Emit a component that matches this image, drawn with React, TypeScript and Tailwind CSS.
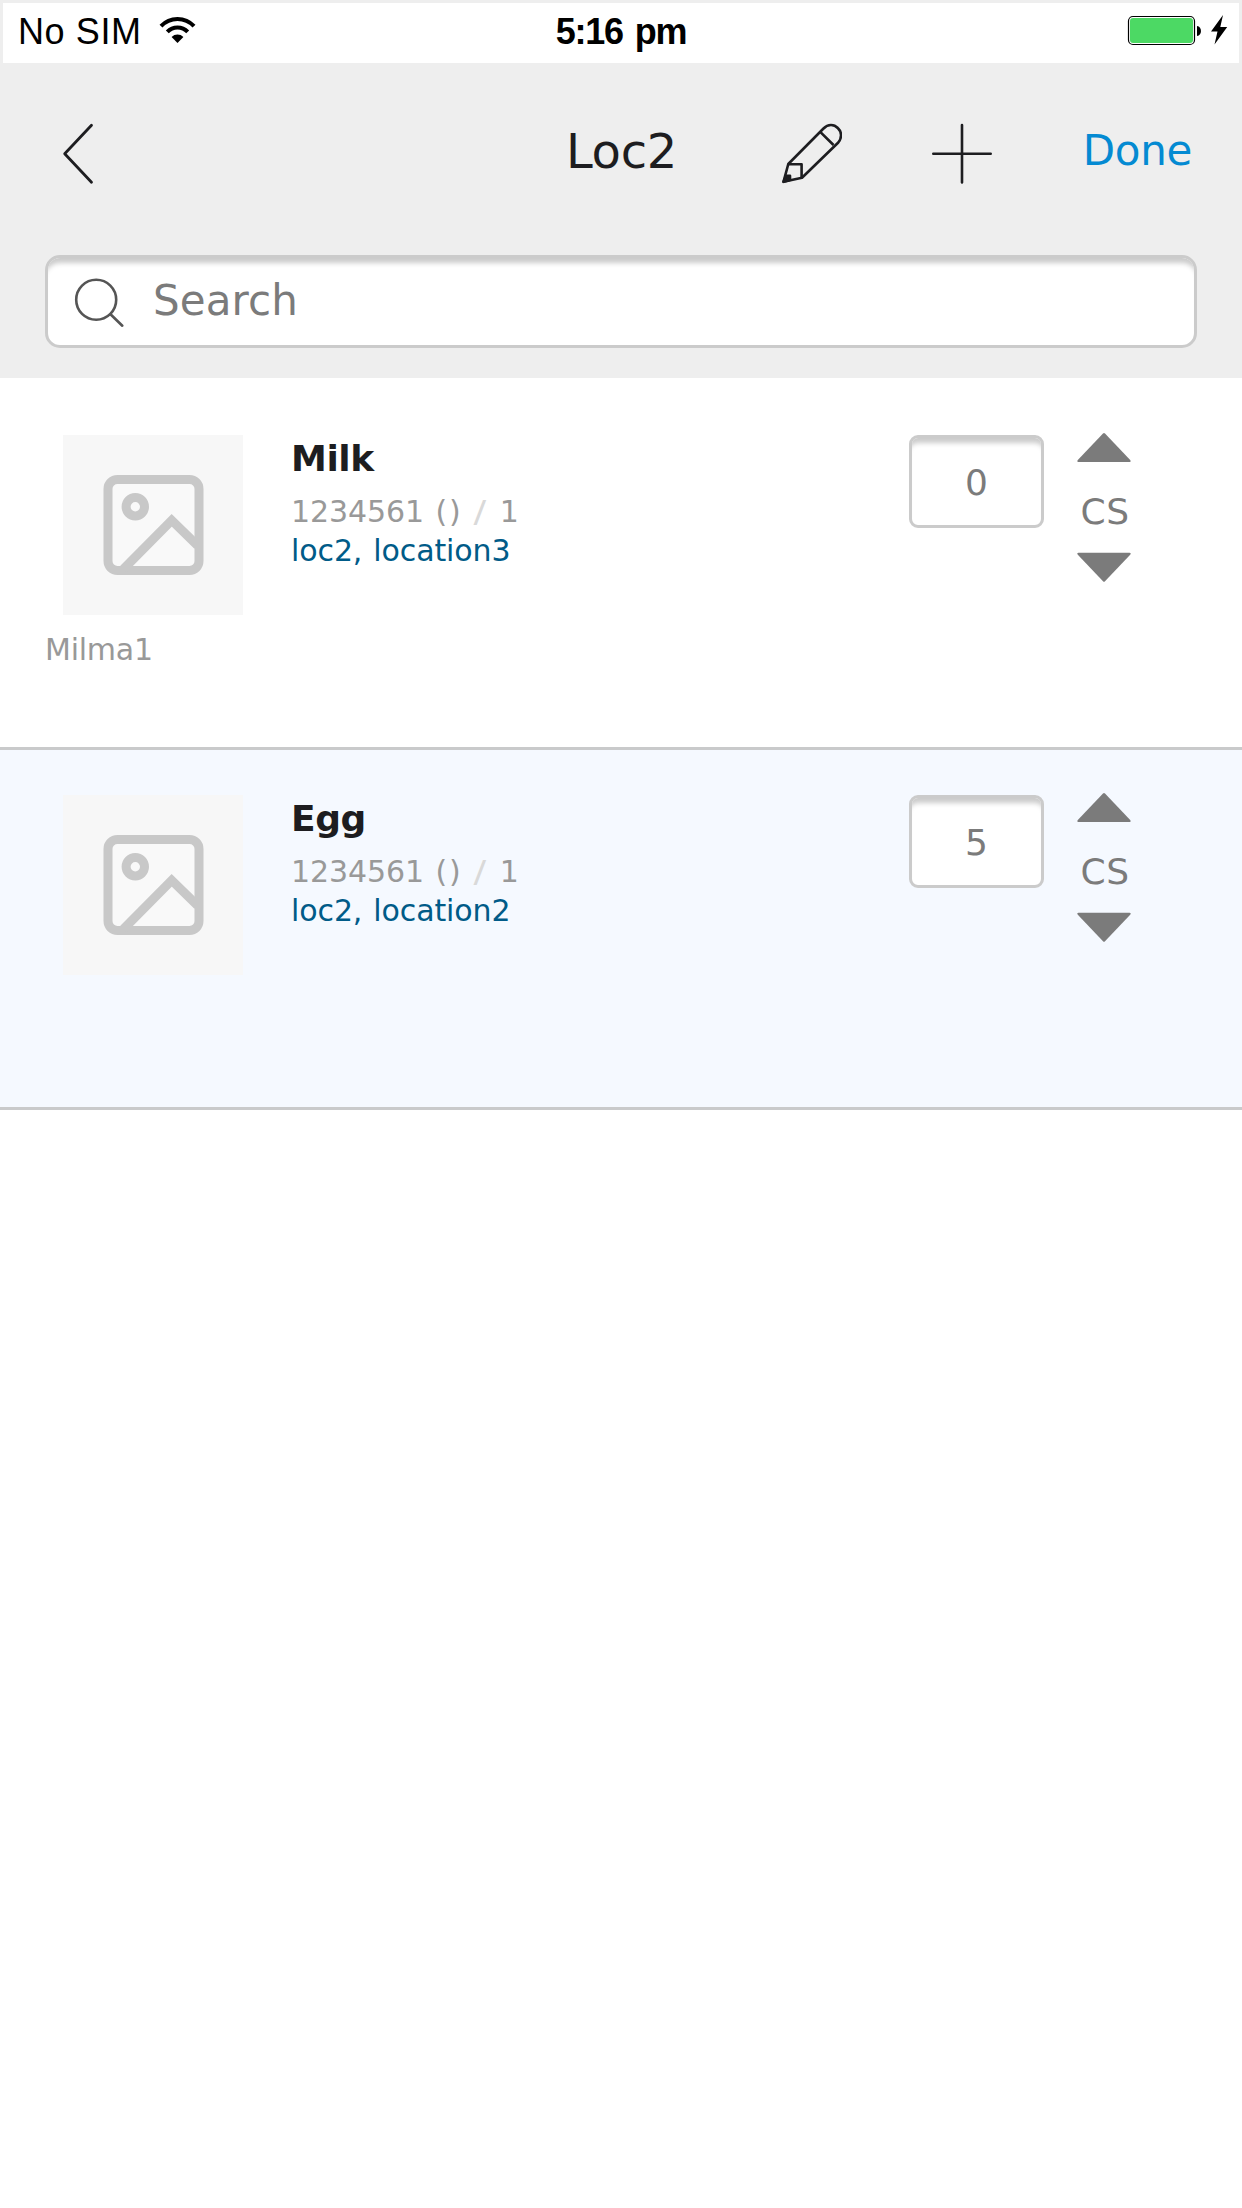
import React from "react";

type Item = { name: string; code: string; count: string; locations: string; qty: string; brand?: string; active?: boolean };

const items: Item[] = [
  { name: "Milk", code: "1234561", count: "1", locations: "loc2, location3", qty: "0", brand: "Milma1" },
  { name: "Egg", code: "1234561", count: "1", locations: "loc2, location2", qty: "5", active: true },
];

function WifiIcon() {
  return (
    <svg className="ml-[18px] mt-[12px] h-[30px] w-[40px]" viewBox="158 15 40 30" fill="none" stroke="#000" strokeWidth="4">
      <path d="M161 26.2A22.5 22.5 0 0 1 194 26.2" />
      <path d="M167.3 31.8A14 14 0 0 1 187.7 31.8" />
      <path d="M171.6 37A8.3 8.3 0 0 1 183.4 37L177.5 43Z" fill="#000" stroke="none" />
    </svg>
  );
}

function StatusBar() {
  return (
    <div className="grid h-[60px] grid-cols-3 bg-white font-['Liberation_Sans'] text-[36px] leading-[57px] text-black">
      <div className="flex">
        <span className="ml-[15px] w-[122px] whitespace-nowrap tracking-[0.6px]">No SIM</span>
        <WifiIcon />
      </div>
      <div className="text-center font-bold tracking-[-1.2px] [word-spacing:3px]">5:16 pm</div>
      <div className="flex justify-end">
        <svg className="mt-[12px] mr-[10px] h-[31px] w-[102px]" viewBox="1127 15 102 31">
          <rect x="1128.5" y="16.5" width="66" height="28" rx="4.5" fill="#fff" stroke="#000" strokeWidth="1.2" />
          <rect x="1130" y="18" width="63" height="25" rx="3" fill="#4cd964" />
          <path d="M1197 26C1202.3 26.5 1202.3 35.5 1197 36Z" />
          <path d="M1223 15L1211 31.5H1217.5L1214.5 44.5L1227.2 27H1220.3Z" />
        </svg>
      </div>
    </div>
  );
}

function NavBar() {
  return (
    <div className="grid h-[192px] grid-cols-[1fr_auto_1fr] items-start text-[#1d1d20]">
      <svg className="mt-[60px] ml-[62px] h-[62px] w-[33px]" viewBox="62 123 33 62" fill="none" stroke="currentColor" strokeWidth="2.8" strokeLinecap="round" strokeLinejoin="round">
        <path d="M91.5 125.3L64.7 153.8L91.5 182.3" />
      </svg>
      <h1 className="mt-[58px] pl-[1px] text-[48px] leading-[60px] tracking-[-0.3px]">Loc2</h1>
      <div className="flex justify-end">
        <svg className="mt-[60px] mr-[89px] h-[62px] w-[62px]" viewBox="780 123 62 62" fill="none" stroke="currentColor" strokeWidth="2.6" strokeLinejoin="round">
          <path d="M788.3 164L823.5 128.5C828 123.8 834 124 837.8 128C842 132 842 138 838.3 142.5L802 177.8L783.5 181.8Z" />
          <path d="M820.7 132.3L833.5 145M788 164.3H801.6V177.8" />
          <path d="M786 175.8H790V180L783.5 181.8Z" fill="currentColor" />
        </svg>
        <svg className="mt-[60px] mr-[90px] h-[62px] w-[62px]" viewBox="931 123 62 62" fill="none" stroke="currentColor" strokeWidth="2.6" strokeLinecap="round">
          <path d="M933.3 153.7H990.7M962 125V182.5" />
        </svg>
        <button className="mt-[54px] mr-[50px] text-[42px] leading-[60px] tracking-[-0.3px] text-[#048ad2]">Done</button>
      </div>
    </div>
  );
}

function SearchBox() {
  return (
    <div className="mx-[45px] flex h-[93px] items-center rounded-[15px] border-[3px] border-[#cbcbcb] bg-white shadow-[inset_0_9px_5px_-4px_#cbcbcb]">
      <svg className="ml-[26px] mt-[3px] h-[50px] w-[52px]" viewBox="74 278 52 50" fill="none" stroke="#555" strokeWidth="2.6" strokeLinecap="round">
        <circle cx="96.2" cy="299.7" r="20" />
        <path d="M110.5 314.2L122.3 325.7" />
      </svg>
      <span className="-mt-[2px] ml-[27px] text-[42px] leading-[60px] tracking-[0.1px] text-[#7b7b7b]">Search</span>
    </div>
  );
}

function Thumbnail() {
  return (
    <svg className="ml-[18px] h-[180px] w-[180px] bg-[#f7f7f7]" viewBox="0 0 180 180" fill="none" stroke="#c8c8c8" strokeWidth="9">
      <rect x="45" y="44.5" width="91" height="91" rx="9.5" fill="#f9f9f9" />
      <circle cx="72.3" cy="71.7" r="9.2" />
      <path d="M60.5 134L108.7 85.3L134.5 110.5" />
    </svg>
  );
}

function Row({ item }: { item: Item }) {
  return (
    <li className={`flex h-[360px] border-b-[3px] border-[#c9cacb] pt-[45px] pl-[45px] ${item.active ? "bg-[#f5f9ff]" : "bg-white"}`}>
      <div className="w-[246px] text-[30px] leading-[39px] text-[#999]">
        <Thumbnail />
        {item.brand && <div className="mt-[15px] tracking-[-0.25px]">{item.brand}</div>}
      </div>
      <div className="w-[618px] text-[30px] leading-[39px]">
        <h2 className="mb-[10px] text-[36px] leading-[47px] font-bold tracking-[-0.4px] text-[#1d1d20]">{item.name}</h2>
        <div className="flex whitespace-pre text-[#999]">
          <span className="tracking-[-0.1px]">{item.code}</span>
          <span className="ml-[11.5px] tracking-[1.9px]">()</span>
          <span className="ml-[10px] w-[13.6px] scale-x-125 text-center text-[#d9d9d9]">/</span>
          <span className="ml-[13.5px]">{item.count}</span>
        </div>
        <div className="tracking-[-0.1px] text-[#005b88] [word-spacing:1.5px]">{item.locations}</div>
      </div>
      <div className="flex h-[93px] w-[135px] items-center justify-center rounded-[9px] border-[3px] border-[#cbcbcb] bg-white pt-[2px] text-[36px] leading-[44px] text-[#7b7b7b] shadow-[inset_0_9px_5px_-4px_#cbcbcb]">
        {item.qty}
      </div>
      <div className="-mt-[2px] ml-[33px] flex w-[54px] flex-col items-center text-[#7b7b7b]">
        <svg className="h-[30px] w-[54px]" viewBox="0 0 54 30" fill="currentColor">
          <path d="M26 .6Q27 -.4 28 .6L53.2 27Q54.5 29 52.5 29H1.5Q-.5 29 .8 27Z" />
        </svg>
        <span className="mt-[34px] mb-[26px] pl-[2px] text-[36px] leading-[30px] tracking-[0.6px]">CS</span>
        <svg className="-mt-[1px] h-[30px] w-[54px]" viewBox="0 0 54 30" fill="currentColor">
          <path d="M26 29.2Q27 30.2 28 29.2L53.2 2.7Q54.5 .7 52.5 .7H1.5Q-.5 .7 .8 2.7Z" />
        </svg>
      </div>
    </li>
  );
}

export default function App() {
  return (
    <div className="h-[2208px] w-[1242px] overflow-hidden bg-white font-[Verdana,'DejaVu_Sans',sans-serif]">
      <header className="h-[378px] bg-[#eee]">
        <div className="px-[3px] pt-[3px]">
          <StatusBar />
        </div>
        <NavBar />
        <SearchBox />
      </header>
      <ul className="pt-[12px]">
        {items.map((item) => (
          <Row key={item.name} item={item} />
        ))}
      </ul>
    </div>
  );
}
